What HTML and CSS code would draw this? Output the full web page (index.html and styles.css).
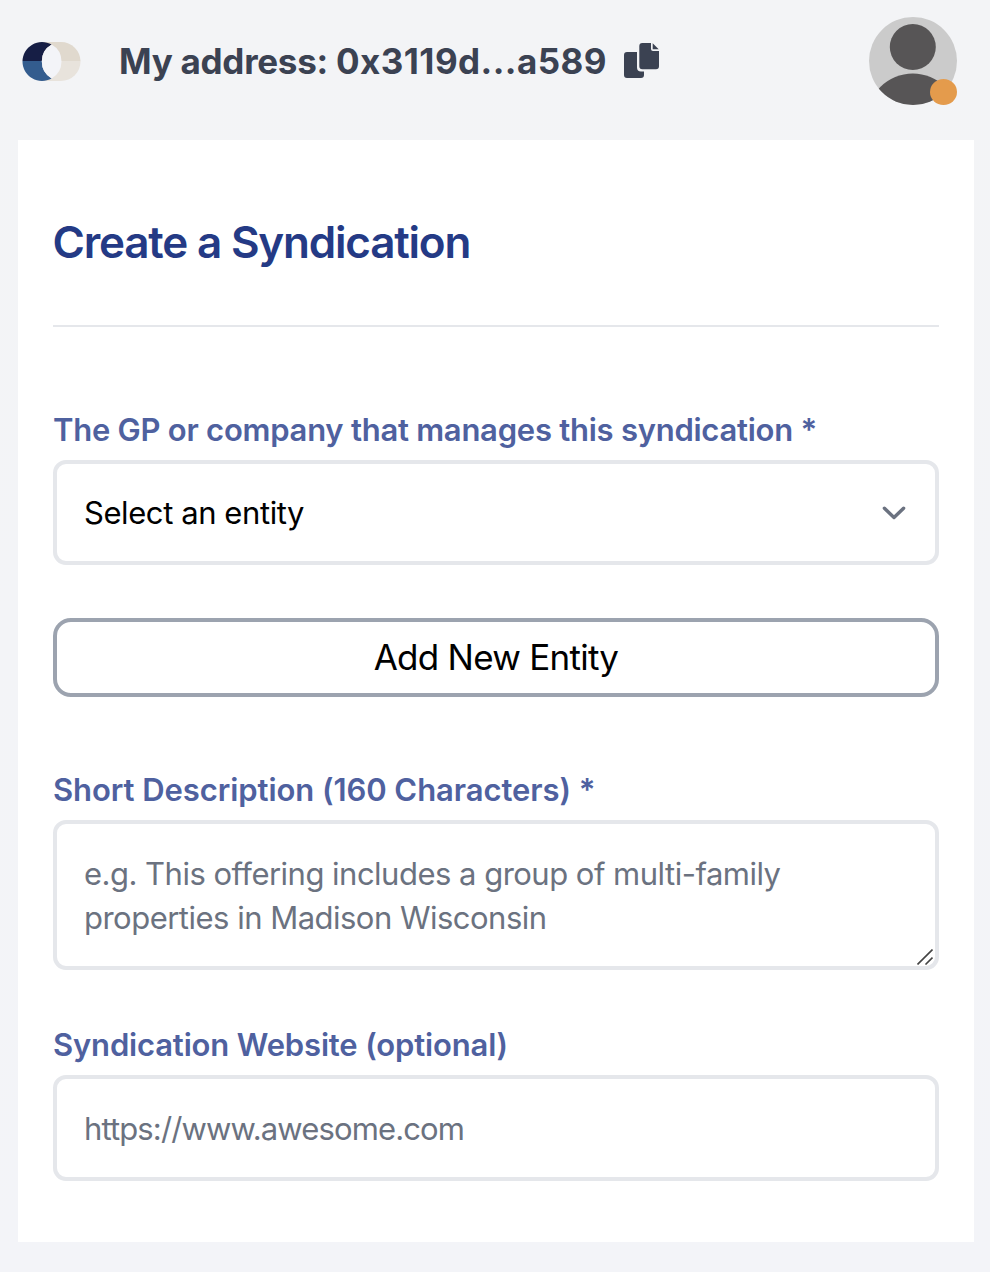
FILE: index.html
```html
<!DOCTYPE html>
<html lang="en">
<head>
<meta charset="utf-8">
<title>Create a Syndication</title>
<link rel="stylesheet" href="styles.css">
</head>
<body>
<header class="topbar">
  <svg class="logo" width="60" height="40" viewBox="0 0 60 40" aria-hidden="true">
    <defs>
      <clipPath id="top"><rect width="60" height="19"/></clipPath>
      <clipPath id="bottom"><rect y="19" width="60" height="21"/></clipPath>
    </defs>
    <g clip-path="url(#top)">
      <rect x="2" width="56.5" height="39" rx="19.5" fill="#e0d9ce"/>
      <path d="M29.65 2.56A19.5 19.5 0 1 0 29.65 36.44A19.5 19.5 0 0 1 29.65 2.56Z" fill="#161e45"/>
    </g>
    <g clip-path="url(#bottom)">
      <rect x="2" width="56.5" height="39" rx="19.5" fill="#e8e3dc"/>
      <path d="M29.65 2.56A19.5 19.5 0 1 0 29.65 36.44A19.5 19.5 0 0 1 29.65 2.56Z" fill="#335c8e"/>
    </g>
    <path d="M29.65 2.56A19.5 19.5 0 0 1 29.65 36.44A19.5 19.5 0 0 1 29.65 2.56Z" fill="#f3f4f8"/>
  </svg>
  <p class="address"><span class="address-label">My address: </span><span class="address-value">0x3119d...a589</span></p>
  <svg class="copy" width="36" height="36" viewBox="0 0 36 36" fill="#3b4252" aria-hidden="true">
    <path d="M3 9H13V24.5a4 4 0 0 0 4 4H20V32a3 3 0 0 1-3 3H3a3 3 0 0 1-3-3V12a3 3 0 0 1 3-3Z"/>
    <path d="M18.3 0H27V6a2 2 0 0 0 2 2H35V23.2a3 3 0 0 1-3 3H18.3a3 3 0 0 1-3-3V3a3 3 0 0 1 3-3Z"/>
    <path d="M28.7 0.3 34.7 6.3H28.7Z"/>
  </svg>
  <div class="avatar">
    <svg width="88" height="88" viewBox="0 0 88 88" aria-hidden="true">
      <defs><clipPath id="face"><circle cx="44" cy="44" r="44"/></clipPath></defs>
      <g clip-path="url(#face)">
        <rect width="88" height="88" fill="#cbcbcb"/>
        <circle cx="43.8" cy="30" r="23" fill="#575556"/>
        <circle cx="43.8" cy="102.5" r="46" fill="#575556"/>
      </g>
    </svg>
    <span class="status"></span>
  </div>
</header>
<main class="card">
  <h1 class="title">Create a Syndication</h1>
  <form class="form">
    <div class="field">
      <label class="label label-entity">The GP or company that manages this syndication *</label>
      <div class="control select">
        <span class="value">Select an entity</span>
        <svg width="24" height="14" viewBox="0 0 24 14" fill="none" stroke="#6b7280" stroke-width="3.4" stroke-linecap="round" stroke-linejoin="round" aria-hidden="true"><path d="M2.4 2.2 12 11.5 21.6 2.2"/></svg>
      </div>
    </div>
    <button class="add" type="button"><span>Add New Entity</span></button>
    <div class="field">
      <label class="label label-desc" for="desc">Short Description (160 Characters) *</label>
      <div class="area">
        <textarea class="control textarea" id="desc" placeholder="e.g. This offering includes a group of multi-family properties in Madison Wisconsin"></textarea>
        <svg class="grip" width="16" height="16" viewBox="0 0 16 16" stroke="#444" stroke-width="1.6" aria-hidden="true"><path d="M0.5 15.5 15.5 0.5M8.5 15.5 15.5 8.5"/></svg>
      </div>
    </div>
    <div class="field website">
      <label class="label label-site" for="site">Syndication Website (optional)</label>
      <input class="control input" id="site" type="text" placeholder="https://www.awesome.com">
    </div>
  </form>
</main>
</body>
</html>
```

FILE: styles.css
```css
* { box-sizing: border-box; }
body {
  margin: 0;
  min-height: 1272px;
  padding: 0 16px 30px 18px;
  background: linear-gradient(#f3f4f6, #f3f4f8);
  font-family: Inter, "Liberation Sans", sans-serif;
}
.topbar {
  display: flex;
  align-items: flex-start;
  height: 140px;
  padding: 17px 17px 0 4px;
}
.logo { margin-top: 25px; }
.address {
  margin: 22px 0 0 37px;
  width: 488px;
  font-size: 35px;
  line-height: 44px;
  font-weight: 700;
  color: #3b4252;
  white-space: nowrap;
}
.address-label { letter-spacing: -0.27px; }
.address-value { letter-spacing: 0.45px; }
.copy { margin: 26px 0 0 17px; }
.avatar { position: relative; width: 88px; height: 88px; margin-left: auto; }
.status {
  position: absolute;
  right: 0;
  bottom: 0;
  width: 27px;
  height: 26px;
  border-radius: 50%;
  background: #e49b4c;
}
.card { height: 1102px; padding: 74px 35px 0; background: #fff; }
.title {
  margin: 0 0 0 -0.5px;
  height: 111px;
  color: #243a85;
  font-size: 44px;
  line-height: 56px;
  font-weight: 600;
  letter-spacing: -1.2px;
  white-space: nowrap;
}
.form { padding-top: 81px; border-top: 2px solid #e5e7eb; }
.field { display: flex; flex-direction: column; }
.label {
  height: 51.5px;
  color: #4f619f;
  font-size: 31px;
  line-height: 44px;
  font-weight: 600;
  white-space: nowrap;
}
.label-entity { letter-spacing: -0.25px; }
.label-desc { letter-spacing: -0.07px; line-height: 42px; }
.label-site { letter-spacing: -0.16px; line-height: 42px; }
.control {
  display: block;
  width: 100%;
  margin: 0;
  padding: 0 27px;
  border: 4px solid #e5e7eb;
  border-radius: 13px;
  background: #fff;
  font: 400 31px/44px Inter, "Liberation Sans", sans-serif;
  color: #000;
}
.control::placeholder { color: #6b7280; opacity: 1; }
.select {
  display: flex;
  align-items: center;
  justify-content: space-between;
  height: 105.5px;
  padding-top: 2px;
  padding-right: 29px;
  letter-spacing: -0.42px;
}
.add {
  display: block;
  width: 100%;
  height: 79px;
  margin: 53px 0 71.5px;
  padding: 0 0 2px;
  border: 4px solid #9ca3af;
  border-radius: 18px;
  background: #fff;
  color: #000;
  font: 400 35px/48px Inter, "Liberation Sans", sans-serif;
  letter-spacing: -0.74px;
}
.area { position: relative; }
.textarea {
  height: 150px;
  padding-top: 28px;
  resize: none;
  overflow: hidden;
  letter-spacing: -0.51px;
}
.grip { position: absolute; right: 6px; bottom: 5px; }
.website { margin-top: 53.5px; }
.input { height: 105.5px; padding-top: 2px; letter-spacing: -0.87px; }
```
